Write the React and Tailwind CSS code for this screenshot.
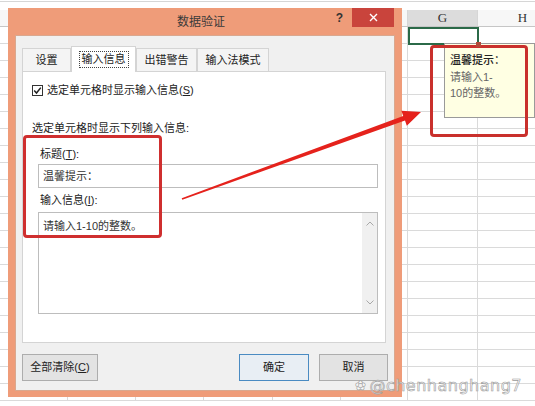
import React from "react";

const FONT = { fontFamily: '"Liberation Sans", "Noto Sans CJK SC", sans-serif' };

const colWidths = [68, 68, 68, 69, 68, 67, 70, 90];
const colNames = ["A", "B", "C", "D", "E", "F", "G", "H"];

const Sheet = () => (
  <div className="w-[535px] h-[406px] bg-white overflow-hidden flex flex-col">
    <div className="mt-[1px] h-[9px] border-t border-[#d6d6d6] shrink-0" />
    {/* column headers */}
    <div className="flex h-[17px] shrink-0 border-b border-[#c6c6c6]">
      {colNames.map((c, i) => (
        <div
          key={c}
          style={{ width: colWidths[i] }}
          className={
            "shrink-0 border-r border-[#d6d6d6] flex items-center justify-center text-[13px] text-[#333] " +
            (c === "G" ? "bg-[#dcdcdc]" : "bg-[#f7f7f7]")
          }
        >
          <span style={{ fontFamily: '"Liberation Serif", serif' }}>{c}</span>
        </div>
      ))}
    </div>
    {Array.from({ length: 22 }).map((_, r) => (
      <div key={r} className="flex h-[17px] shrink-0 border-b border-[#dadada]">
        {colWidths.map((w, i) => (
          <div key={i} style={{ width: w }} className="shrink-0 border-r border-[#dadada]" />
        ))}
      </div>
    ))}
  </div>
);

const Tab = ({ label, w, active }) => (
  <div
    style={{ width: w }}
    className={
      "flex items-center justify-center border border-[#d4d4d4] text-[11px] text-[#222] " +
      (active
        ? "h-[26px] bg-white border-b-0 -mb-[1px] z-10"
        : "h-[23px] bg-[#f4f4f4] border-b-0")
    }
  >
    <span className={active ? "border border-dotted border-[#444] px-[2px] leading-[15px]" : ""}>
      {label}
    </span>
  </div>
);

const Dialog = () => (
  <div className="absolute left-[8px] top-[8px] w-[394px] h-[389px] bg-[#ef9c79] flex flex-col">
    {/* title bar */}
    <div className="h-[27px] flex shrink-0">
      <div className="flex-1" />
      <div className="flex items-center text-[12px] text-[#3a3a3a] pt-[1px]">数据验证</div>
      <div className="flex-1 flex justify-end items-start pr-[8px]">
        <div className="h-[19px] flex items-center mr-[9px] text-[12px] font-bold text-[#333]">?</div>
        <div className="w-[42px] h-[19px] bg-[#c9443c] flex items-center justify-center">
          <svg width="9" height="9" viewBox="0 0 9 9">
            <path d="M1 1 L8 8 M8 1 L1 8" stroke="#fff" strokeWidth="1.4" />
          </svg>
        </div>
      </div>
    </div>
    {/* body */}
    <div className="mx-[7px] h-[356px] bg-[#f0f0f0] border border-[#d9a88f] px-[6px] flex flex-col">
      <div className="flex items-end mt-[9px] h-[26px]">
        <Tab label="设置" w={49} />
        <Tab label="输入信息" w={65} active />
        <Tab label="出错警告" w={61} />
        <Tab label="输入法模式" w={72} />
      </div>
      <div className="w-[364px] h-[272px] bg-white border border-[#d4d4d4] flex flex-col pl-[9px] text-[11px] text-[#222]">
        <div className="mt-[10px] h-[16px] flex items-center">
          <div className="w-[11px] h-[11px] border border-[#333] bg-white flex items-center justify-center">
            <svg width="9" height="9" viewBox="0 0 9 9">
              <path d="M1.2 4.6 L3.5 7 L7.8 1.6" fill="none" stroke="#222" strokeWidth="1.5" />
            </svg>
          </div>
          <span className="ml-[4px]">
            选定单元格时显示输入信息(<span className="underline">S</span>)
          </span>
        </div>
        <div className="mt-[22px] h-[16px] flex items-center">选定单元格时显示下列输入信息:</div>
        <div className="mt-[10px] ml-[8px] h-[16px] flex items-center">
          标题(<span className="underline">T</span>):
        </div>
        <div className="mt-[2px] ml-[6px] w-[340px] h-[24px] border border-[#bdbdbd] flex items-center pl-[4px] text-[#333]">
          温馨提示：
        </div>
        <div className="mt-[4px] ml-[8px] h-[16px] flex items-center">
          输入信息(<span className="underline">I</span>):
        </div>
        <div className="mt-[4px] ml-[6px] w-[340px] h-[102px] border border-[#bdbdbd] flex">
          <div className="flex-1 pl-[4px] pt-[5px] text-[#333]">请输入1-10的整数。</div>
          <div className="w-[15px] bg-[#f0f0f0] flex flex-col items-center justify-between py-[8px]">
            <svg width="8" height="5" viewBox="0 0 8 5">
              <path d="M0.5 4.5 L4 1 L7.5 4.5" fill="none" stroke="#a8a8a8" strokeWidth="1" />
            </svg>
            <svg width="8" height="5" viewBox="0 0 8 5">
              <path d="M0.5 0.5 L4 4 L7.5 0.5" fill="none" stroke="#a8a8a8" strokeWidth="1" />
            </svg>
          </div>
        </div>
      </div>
      <div className="mt-[11px] flex text-[11px] text-[#222]">
        <div className="w-[76px] h-[27px] bg-[#e3e3e3] border border-[#adadad] flex items-center justify-center">
          全部清除(<span className="underline">C</span>)
        </div>
        <div className="ml-auto w-[70px] h-[27px] bg-[#e8eef4] border border-[#4a8bc2] flex items-center justify-center">
          确定
        </div>
        <div className="ml-[10px] w-[69px] h-[27px] bg-[#e3e3e3] border border-[#adadad] flex items-center justify-center">
          取消
        </div>
      </div>
    </div>
  </div>
);

const Callouts = () => (
  <>
    {/* selected cell G1 */}
    <div className="absolute left-[408px] top-[27px] w-[71px] h-[18px] border-2 border-[#2b6a48]" />
    {/* tooltip */}
    <div className="absolute left-[444px] top-[43px] w-[91px] h-[75px] bg-[#ffffe3] border border-[#9a9a9a] pl-[5px] pt-[8px] text-[11px] leading-[16.5px]">
      <div className="text-[#222] font-medium">温馨提示：</div>
      <div className="text-[#666]">请输入1-</div>
      <div className="text-[#666]">10的整数。</div>
    </div>
    {/* annotation boxes */}
    <div className="absolute left-[430px] top-[45px] w-[98px] h-[92px] border-[3px] border-[#c9302c] rounded-[4px]" />
    <div className="absolute left-[476px] top-[42px] w-[5px] h-[5px] bg-[#b24a3a]" />
    <div className="absolute left-[23px] top-[135px] w-[139px] h-[103px] border-[3px] border-[#cf2f2f] rounded-[4px]" />
    {/* arrow */}
    <svg className="absolute left-0 top-0" width="535" height="406" viewBox="0 0 535 406">
      <polygon
        points="182.3,199.8 405,120.6 406.8,125.7 421,112 401.4,110.7 403.2,115.9 181.7,198.2"
        fill="#e5221c"
      />
    </svg>
    {/* watermark */}
    <div
      className="absolute left-[355px] top-[374px] text-[16px] tracking-[0.5px] text-white/70 [-webkit-text-stroke:0.6px_#9a9a9a] flex items-center gap-[3px]"
      style={{ fontFamily: '"DejaVu Sans", sans-serif' }}
    >
      <span className="text-[13px]">✿</span>
      <span>@chenhanghang7</span>
    </div>
  </>
);

export default function App() {
  return (
    <div className="relative w-[535px] h-[406px] overflow-hidden" style={FONT}>
      <Sheet />
      <Dialog />
      <Callouts />
    </div>
  );
}
